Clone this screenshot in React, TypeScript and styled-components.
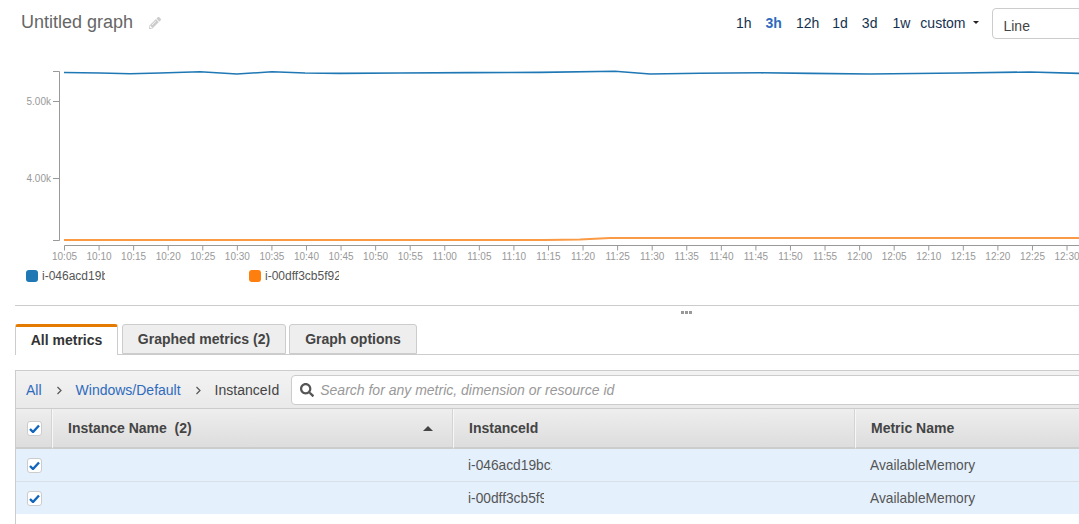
import React from "react";
import styled, { createGlobalStyle } from "styled-components";
import { FaPencilAlt, FaSearch } from "react-icons/fa";

const GlobalStyle = createGlobalStyle`
  html, body {
    margin: 0;
    padding: 0;
    background: #fff;
    overflow: hidden;
    font-family: "Liberation Sans", Arial, sans-serif;
  }
`;

const Page = styled.div`
  width: 1079px;
  height: 524px;
  overflow: hidden;
`;

const Header = styled.div`
  display: flex;
  align-items: flex-start;
  justify-content: space-between;
  height: 40px;
  padding-left: 21px;
`;

const TitleBlock = styled.div`
  display: flex;
  align-items: center;
  gap: 16px;
  height: 44px;
  color: #666;
  font-size: 18px;
`;

const PencilIcon = styled(FaPencilAlt)`
  width: 12px;
  height: 12px;
  color: #ccc;
  margin-top: 1px;
`;

const RangeBar = styled.div`
  display: flex;
  align-items: flex-start;
  width: 344px;
  flex: none;
`;

const RangeLink = styled.span<{ $left: number; $active?: boolean }>`
  margin-left: ${(p) => p.$left}px;
  line-height: 46px;
  font-size: 14px;
  font-weight: ${(p) => (p.$active ? 700 : 400)};
  color: ${(p) => (p.$active ? "#2e6bbd" : "#16314f")};
`;

const Caret = styled.i`
  width: 0;
  height: 0;
  margin: 21px 13px 0 8px;
  border-left: 3px solid transparent;
  border-right: 3px solid transparent;
  border-top: 3px solid #222;
`;

const LineSelect = styled.div`
  flex: none;
  box-sizing: border-box;
  width: 120px;
  height: 31px;
  margin-top: 8px;
  padding: 9px 0 0 10px;
  border: 1px solid #ccc;
  border-radius: 4px;
  color: #444;
  font-size: 14px;
  line-height: 16px;
`;

const ChartSvg = styled.svg`
  display: block;
  width: 1079px;
  height: 222px;
`;

const AxisText = styled.text`
  fill: #999;
  font-size: 10px;
`;

const Legend = styled.div`
  display: flex;
  height: 44px;
  padding: 8px 0 0 11px;
  box-sizing: border-box;
  border-bottom: 1px solid #ccc;
  margin-left: 15px;
`;

const LegendItem = styled.div`
  display: flex;
  align-items: center;
  gap: 4px;
  width: 223px;
  height: 12px;
  font-size: 12px;
  color: #555;
`;

const Swatch = styled.span<{ $color: string }>`
  width: 12px;
  height: 12px;
  border-radius: 3px;
  background: ${(p) => p.$color};
`;

const Clipped = styled.span<{ $width: number }>`
  display: block;
  width: ${(p) => p.$width}px;
  overflow: hidden;
  white-space: nowrap;
`;

const Handle = styled.div`
  display: flex;
  justify-content: center;
  gap: 1px;
  height: 18px;
  padding: 5px 0 0 293px;
  box-sizing: border-box;
`;

const Dot = styled.i`
  width: 3px;
  height: 3px;
  background: #999;
`;

const Panel = styled.div`
  width: 1300px;
  margin-left: 15px;
`;

const Tabs = styled.div`
  display: flex;
  height: 31px;
  box-sizing: border-box;
  border-bottom: 1px solid #ccc;
`;

const Tab = styled.div<{ $active?: boolean; $width: number }>`
  box-sizing: border-box;
  width: ${(p) => p.$width}px;
  height: ${(p) => (p.$active ? 31 : 30)}px;
  margin-right: ${(p) => (p.$active ? 4 : 3)}px;
  border: 1px solid #ccc;
  border-top: ${(p) => (p.$active ? "3px solid #e57a00" : "1px solid #ccc")};
  border-bottom: ${(p) => (p.$active ? "none" : "1px solid #ccc")};
  border-radius: 3px 3px 0 0;
  background: ${(p) => (p.$active ? "#fff" : "#eee")};
  color: ${(p) => (p.$active ? "#333" : "#444")};
  font-size: 14px;
  font-weight: 700;
  text-align: center;
  line-height: ${(p) => (p.$active ? 27 : 29)}px;
  white-space: nowrap;
`;

const TabBody = styled.div`
  min-height: 200px;
  border-left: 1px solid #ccc;
`;

const Crumbs = styled.div`
  display: flex;
  align-items: center;
  box-sizing: border-box;
  height: 39px;
  margin-top: 15px;
  padding-left: 10px;
  border-top: 1px solid #ccc;
  border-bottom: 1px solid #ccc;
  background: linear-gradient(#f3f3f3, #e9e9e9);
  font-size: 14px;
`;

const CrumbLink = styled.span`
  color: #2e6bbd;
`;

const CrumbText = styled.span`
  color: #444;
`;

const Chevron = styled.svg`
  width: 7px;
  height: 9px;
  margin: 1px 13px 0 14px;
  fill: none;
  stroke: #555;
  stroke-width: 1.2;
`;

const SearchBox = styled.div`
  display: flex;
  align-items: center;
  gap: 6px;
  flex: 1;
  box-sizing: border-box;
  height: 30px;
  margin-left: 12px;
  padding-left: 8px;
  background: #fff;
  border: 1px solid #ccc;
  border-radius: 4px;
  color: #999;
  font-size: 14px;
  font-style: italic;
`;

const SearchIcon = styled(FaSearch)`
  width: 14px;
  height: 14px;
  color: #555;
`;

const Grid = styled.div`
  display: grid;
  grid-template-columns: 37px 401px 402px 1fr;
`;

const HeadCell = styled.div<{ $between?: boolean }>`
  display: flex;
  align-items: center;
  justify-content: ${(p) => (p.$between ? "space-between" : "flex-start")};
  box-sizing: border-box;
  height: 40px;
  padding: 0 20px 0 15px;
  border-bottom: 2px solid #ccc;
  border-right: 1px solid #f7f7f7;
  box-shadow: inset -1px 0 0 #d4d4d4;
  background: linear-gradient(#eee, #ddd);
  color: #444;
  font-size: 14px;
  font-weight: 700;
  white-space: pre;
`;

const CheckHead = styled(HeadCell)`
  padding: 0 0 0 11px;
`;

const SortArrow = styled.i`
  width: 0;
  height: 0;
  border-left: 5px solid transparent;
  border-right: 5px solid transparent;
  border-bottom: 5px solid #444;
`;

const RowCell = styled.div<{ $last?: boolean }>`
  display: flex;
  align-items: center;
  box-sizing: border-box;
  height: ${(p) => (p.$last ? 32 : 33)}px;
  padding-left: 14px;
  padding-top: ${(p) => (p.$last ? 0 : 1)}px;
  border-bottom: ${(p) => (p.$last ? "none" : "1px solid #d8dfe6")};
  background: #e4f0fc;
  color: #555;
  font-size: 13.75px;
`;

const CheckCell = styled(RowCell)`
  padding-left: 11px;
  padding-top: 0;
`;

const CheckBox = styled.span`
  display: flex;
  align-items: center;
  justify-content: center;
  box-sizing: border-box;
  width: 15px;
  height: 15px;
  background: #fff;
  border: 1px solid #ccc;
  border-radius: 3px;
`;

const Check = () => (
  <CheckBox>
    <svg width="11" height="9" viewBox="0 0 11 9">
      <path d="M1 5 L4 8 L10 1.5" fill="none" stroke="#1166bb" strokeWidth="2.4" />
    </svg>
  </CheckBox>
);

const Arrow = () => (
  <Chevron viewBox="0 0 7 9">
    <path d="M1.5 1 L5 4.5 L1.5 8" />
  </Chevron>
);

// chart top sits at y=40 in the page
const top = 40;
const blue: [number, number][] = [
  [64, 72.5], [100, 73], [130, 73.8], [160, 73], [200, 71.8], [237, 74], [272, 71.8], [305, 73],
  [340, 73.4], [400, 73], [470, 72.6], [540, 72.4], [615, 71.2], [650, 74], [700, 73.2], [760, 72.8],
  [810, 73.4], [870, 74], [960, 73], [1030, 72], [1079, 73.4],
];
const orange: [number, number][] = [
  [64, 240], [545, 240], [580, 239.4], [610, 238], [1079, 238],
];
const toPoints = (pts: [number, number][]) => pts.map(([x, y]) => `${x},${y - top}`).join(" ");

const ticks = Array.from({ length: 30 }, (_, i) => {
  const mins = 10 * 60 + 5 + i * 5;
  const label = `${Math.floor(mins / 60)}:${String(mins % 60).padStart(2, "0")}`;
  return { x: 64.5 + i * 34.57, label };
});

const Chart = () => (
  <ChartSvg viewBox="0 0 1079 222">
    <path d="M53 31.5H59.5V200.5H53M53 61.5H59.5M53 138.5H59.5" fill="none" stroke="#999" />
    <AxisText x="51" y="65" textAnchor="end">5.00k</AxisText>
    <AxisText x="51" y="142" textAnchor="end">4.00k</AxisText>
    <path d="M64.5 205.5H1079" stroke="#999" fill="none" />
    {ticks.map((t) => (
      <g key={t.label}>
        <path d={`M${t.x} 205.5V210.5`} stroke="#999" />
        <AxisText x={t.x} y="220" textAnchor="middle">{t.label}</AxisText>
      </g>
    ))}
    <polyline points={toPoints(blue)} fill="none" stroke="#1f77b4" strokeWidth="1.6" />
    <polyline points={toPoints(orange)} fill="none" stroke="#fb9a45" strokeWidth="2" />
  </ChartSvg>
);

export default function App() {
  return (
    <Page>
      <GlobalStyle />
      <Header>
        <TitleBlock>
          Untitled graph
          <PencilIcon />
        </TitleBlock>
        <RangeBar>
          <RangeLink $left={1}>1h</RangeLink>
          <RangeLink $left={14} $active>3h</RangeLink>
          <RangeLink $left={14}>12h</RangeLink>
          <RangeLink $left={13}>1d</RangeLink>
          <RangeLink $left={14}>3d</RangeLink>
          <RangeLink $left={15}>1w</RangeLink>
          <RangeLink $left={10}>custom</RangeLink>
          <Caret />
          <LineSelect>Line</LineSelect>
        </RangeBar>
      </Header>
      <Chart />
      <Legend>
        <LegendItem>
          <Swatch $color="#1f77b4" />
          <Clipped $width={63}>i-046acd19bc1f</Clipped>
        </LegendItem>
        <LegendItem>
          <Swatch $color="#ff7f0e" />
          <Clipped $width={74}>i-00dff3cb5f92a</Clipped>
        </LegendItem>
      </Legend>
      <Handle>
        <Dot />
        <Dot />
        <Dot />
      </Handle>
      <Panel>
        <Tabs>
          <Tab $active $width={103}>All metrics</Tab>
          <Tab $width={164}>Graphed metrics (2)</Tab>
          <Tab $width={128}>Graph options</Tab>
        </Tabs>
        <TabBody>
          <Crumbs>
            <CrumbLink>All</CrumbLink>
            <Arrow />
            <CrumbLink>Windows/Default</CrumbLink>
            <Arrow />
            <CrumbText>InstanceId</CrumbText>
            <SearchBox>
              <SearchIcon />
              Search for any metric, dimension or resource id
            </SearchBox>
          </Crumbs>
          <Grid>
            <CheckHead><Check /></CheckHead>
            <HeadCell $between>
              Instance Name  (2)
              <SortArrow />
            </HeadCell>
            <HeadCell>InstanceId</HeadCell>
            <HeadCell>Metric Name</HeadCell>

            <CheckCell><Check /></CheckCell>
            <RowCell />
            <RowCell><Clipped $width={84}>i-046acd19bc1f</Clipped></RowCell>
            <RowCell>AvailableMemory</RowCell>

            <CheckCell $last><Check /></CheckCell>
            <RowCell $last />
            <RowCell $last><Clipped $width={76}>i-00dff3cb5f92a</Clipped></RowCell>
            <RowCell $last>AvailableMemory</RowCell>
          </Grid>
        </TabBody>
      </Panel>
    </Page>
  );
}
